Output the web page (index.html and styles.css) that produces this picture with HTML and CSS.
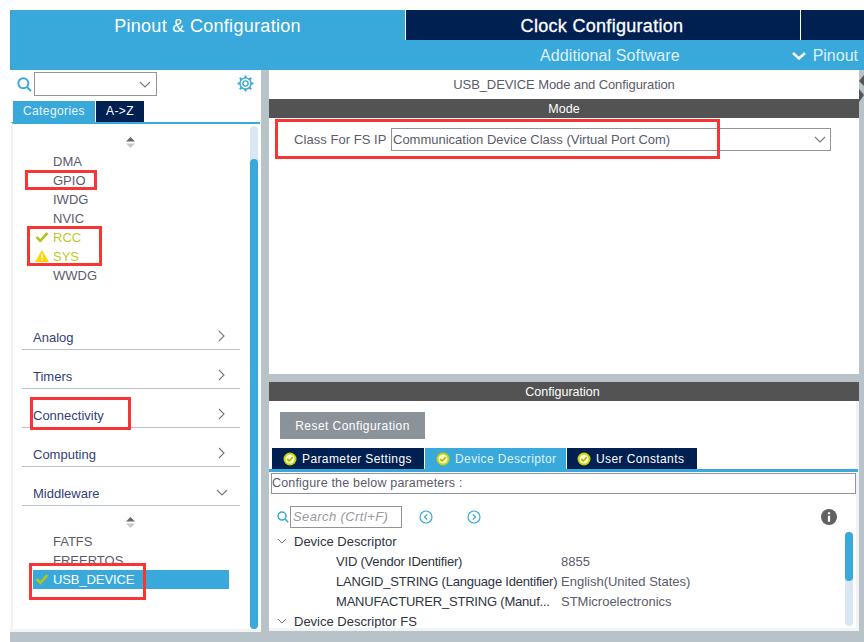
FILE: index.html
```html
<!DOCTYPE html>
<html lang="en">
<head>
    <meta charset="UTF-8" />
    <meta name="viewport" content="width=device-width, initial-scale=1.0">
    <title>Pinout &amp; Configuration</title>
    <link rel="stylesheet" href="styles.css">
</head>
<body>

<svg class="sprites" width="0" height="0">
    <symbol id="tick-badge" viewBox="0 0 14 14">
        <circle cx="7" cy="7" r="6.5" fill="#c9d500"/>
        <circle cx="7" cy="7" r="4.6" fill="#f4f6d8"/>
        <path d="M4.2 7l2 2 3.6-3.8" fill="none" stroke="#b5c000" stroke-width="1.8"/>
    </symbol>
    <symbol id="tick" viewBox="0 0 14 12">
        <path d="M1.5 6l3.8 3.8L12.5 2" fill="none" stroke="#b4c41a" stroke-width="2.6"/>
    </symbol>
    <symbol id="lens" viewBox="0 0 15 15">
        <circle cx="6.3" cy="6.3" r="5" fill="none" stroke="#39a9dc" stroke-width="1.9"/>
        <path d="M10 10l4 4" fill="none" stroke="#39a9dc" stroke-width="2"/>
    </symbol>
    <symbol id="chev-down" viewBox="0 0 12 7">
        <path d="M1 1l5 5 5-5" fill="none" stroke="currentColor" stroke-width="1.1"/>
    </symbol>
    <symbol id="chev-right" viewBox="0 0 7 12">
        <path d="M1 1l5 5-5 5" fill="none" stroke="currentColor" stroke-width="1.1"/>
    </symbol>
    <symbol id="updown" viewBox="0 0 9 11">
        <path d="M4.5 0L9 4.5H0z" fill="#666"/>
        <path d="M4.5 11L0 6.5h9z" fill="#c4c8cb"/>
    </symbol>
</svg>

<div class="app">
    <header class="top">
        <div class="top-tabs">
            <div class="top-tab active">Pinout &amp; Configuration</div>
            <div class="top-tab clock">Clock Configuration</div>
            <div class="top-tab rest"></div>
        </div>
        <div class="top-sub">
            <span class="sub-software">Additional Software</span>
            <span class="sub-pinout">
                <svg width="14" height="8" viewBox="0 0 14 8"><path d="M1 1l6 5.5L13 1" fill="none" stroke="#fff" stroke-width="2.4"/></svg>
                Pinout
            </span>
        </div>
    </header>

    <main class="main">
        <aside class="side">
            <div class="side-search">
                <svg class="lens" width="15" height="15"><use href="#lens"/></svg>
                <div class="side-select"><svg width="12" height="7"><use href="#chev-down"/></svg></div>
                <svg class="gear" width="17" height="17" viewBox="0 0 17 17">
                    <circle cx="8.5" cy="8.5" r="5.6" fill="none" stroke="#39a9dc" stroke-width="1.4"/>
                    <circle cx="8.5" cy="8.5" r="2.6" fill="none" stroke="#39a9dc" stroke-width="1.4"/>
                    <path d="M8.5 0.5v3M8.5 13.5v3M0.5 8.5h3M13.5 8.5h3M2.8 2.8l2.1 2.1M12.1 12.1l2.1 2.1M2.8 14.2l2.1-2.1M12.1 4.9l2.1-2.1" fill="none" stroke="#39a9dc" stroke-width="2"/>
                </svg>
            </div>
            <div class="side-tabs">
                <div class="side-tab active">Categories</div>
                <div class="side-tab">A-&gt;Z</div>
            </div>
            <div class="side-body">
                <div class="side-list">
                    <div class="updown"><svg width="9" height="11"><use href="#updown"/></svg></div>
                    <div class="item">DMA</div>
                    <div class="item">GPIO</div>
                    <div class="item">IWDG</div>
                    <div class="item">NVIC</div>
                    <div class="item ok"><svg width="14" height="12"><use href="#tick"/></svg>RCC</div>
                    <div class="item ok">
                        <svg width="14" height="12" viewBox="0 0 14 12">
                            <path d="M7 0l7 12H0z" fill="#ffd500"/>
                            <path d="M7 4v4M7 9v1.6" stroke="#fff" stroke-width="1.5"/>
                        </svg>SYS
                    </div>
                    <div class="item">WWDG</div>

                    <div class="cats">
                        <div class="cat">Analog<svg width="7" height="12"><use href="#chev-right"/></svg></div>
                        <div class="cat">Timers<svg width="7" height="12"><use href="#chev-right"/></svg></div>
                        <div class="cat">Connectivity<svg width="7" height="12"><use href="#chev-right"/></svg></div>
                        <div class="cat">Computing<svg width="7" height="12"><use href="#chev-right"/></svg></div>
                        <div class="cat">Middleware<svg class="open" width="12" height="7"><use href="#chev-down"/></svg></div>
                    </div>

                    <div class="updown second"><svg width="9" height="11"><use href="#updown"/></svg></div>
                    <div class="item">FATFS</div>
                    <div class="item">FREERTOS</div>
                    <div class="item selected"><svg width="14" height="12"><use href="#tick"/></svg>USB_DEVICE</div>
                </div>
                <div class="side-scroll"><div class="side-thumb"></div></div>
            </div>
        </aside>

        <section class="right">
            <div class="mode">
                <div class="mode-title">USB_DEVICE Mode and Configuration</div>
                <div class="bar">Mode</div>
                <div class="class-row">
                    <span class="class-label">Class For FS IP</span>
                    <div class="class-select">
                        Communication Device Class (Virtual Port Com)
                        <svg width="12" height="7"><use href="#chev-down"/></svg>
                    </div>
                </div>
            </div>

            <div class="config">
                <div class="bar">Configuration</div>
                <div class="reset">Reset Configuration</div>
                <div class="cfg-tabs">
                    <div class="cfg-tab"><svg width="14" height="14"><use href="#tick-badge"/></svg>Parameter Settings</div>
                    <div class="cfg-tab active"><svg width="14" height="14"><use href="#tick-badge"/></svg>Device Descriptor</div>
                    <div class="cfg-tab"><svg width="14" height="14"><use href="#tick-badge"/></svg>User Constants</div>
                </div>
                <div class="cfg-note">Configure the below parameters :</div>
                <div class="cfg-search">
                    <svg width="12" height="12"><use href="#lens"/></svg>
                    <div class="search-box">Search (Crtl+F)</div>
                    <svg class="nav first" width="14" height="14" viewBox="0 0 14 14">
                        <circle cx="7" cy="7" r="6" fill="none" stroke="#39a9dc" stroke-width="1.2"/>
                        <path d="M8.2 4.4L5.6 7l2.6 2.6" fill="none" stroke="#39a9dc" stroke-width="1.3"/>
                    </svg>
                    <svg class="nav" width="14" height="14" viewBox="0 0 14 14">
                        <circle cx="7" cy="7" r="6" fill="none" stroke="#39a9dc" stroke-width="1.2"/>
                        <path d="M5.8 4.4L8.4 7l-2.6 2.6" fill="none" stroke="#39a9dc" stroke-width="1.3"/>
                    </svg>
                    <svg class="info" width="16" height="16" viewBox="0 0 16 16">
                        <circle cx="8" cy="8" r="8" fill="#5f6163"/>
                        <path d="M8 3.2v2M8 6.8v6" stroke="#fff" stroke-width="2.2"/>
                    </svg>
                </div>
                <div class="tree-wrap">
                    <div class="tree">
                        <div class="tree-head"><svg width="10" height="6"><use href="#chev-down"/></svg>Device Descriptor</div>
                        <div class="tree-row"><span>VID (Vendor IDentifier)</span><span>8855</span></div>
                        <div class="tree-row"><span>LANGID_STRING (Language Identifier)</span><span>English(United States)</span></div>
                        <div class="tree-row"><span>MANUFACTURER_STRING (Manuf...</span><span>STMicroelectronics</span></div>
                        <div class="tree-head"><svg width="10" height="6"><use href="#chev-down"/></svg>Device Descriptor FS</div>
                    </div>
                    <div class="tree-scroll"><div class="tree-thumb"></div></div>
                </div>
            </div>
        </section>

        <svg class="splitter" width="5" height="28" viewBox="0 0 5 28">
            <path d="M5 0v11L0 6z" fill="#555"/>
            <path d="M0 14l5 6-5 7z" fill="#555"/>
        </svg>
    </main>

    <!-- annotations drawn over the screenshot -->
    <div class="mark mark-gpio"></div>
    <div class="mark mark-rcc"></div>
    <div class="mark mark-conn"></div>
    <div class="mark mark-usb"></div>
    <div class="mark mark-class"></div>
</div>

</body>
</html>
```

FILE: styles.css
```css
* {
    box-sizing: border-box;
}

body {
    margin: 0;
    padding: 10px 0 0 10px;
    width: 864px;
    height: 642px;
    overflow: hidden;
    background-color: #fff;
    font-family: "Liberation Sans", Arial, sans-serif;
    font-size: 13px;
    color: #5b5b6b;
}

.sprites {
    position: absolute;
}

.app {
    position: relative;
    width: 854px;
    height: 632px;
    background-color: #b8c3c9;
    display: flex;
    flex-direction: column;
}

/* top header */
.top {
    height: 60px;
    background-color: #39a9dc;
    color: #fff;
}

.top-tabs {
    display: flex;
    height: 30px;
}

.top-tab {
    text-align: center;
    font-size: 18px;
    line-height: 32px;
    padding-right: 1px;
}

.top-tab.active {
    width: 395px;
    padding-right: 0;
    letter-spacing: 0.3px;
}

.top-tab.clock {
    width: 396px;
    padding-right: 2px;
    background-color: #002052;
    border-left: 1px solid #fff;
    border-right: 1px solid #fff;
    -webkit-text-stroke: 0.3px #fff;
    letter-spacing: 0.3px;
}

.top-tab.rest {
    flex: 1;
    background-color: #002052;
}

.top-sub {
    position: relative;
    height: 30px;
    display: flex;
    justify-content: flex-end;
    align-items: center;
    padding: 2px 6px 0 0;
    font-size: 16px;
    color: #dff1fa;
}

.sub-software {
    position: absolute;
    left: 530px;
    letter-spacing: 0.1px;
}

.sub-pinout {
    display: flex;
    align-items: center;
    gap: 7px;
}

.sub-pinout svg {
    margin-left: -1px;
}

/* main area */
.main {
    position: relative;
    flex: 1;
    display: flex;
    min-height: 0;
}

.side {
    width: 251px;
    height: 562px;
    background-color: #fff;
    border-bottom: 3px solid #f1f3f4;
    display: flex;
    flex-direction: column;
}

.side-search {
    height: 31px;
    display: flex;
    align-items: center;
    padding: 2px 7px 5px 7px;
}

.side-search .lens {
    flex: none;
    margin-right: 2px;
}

.side-select {
    width: 123px;
    height: 24px;
    border: 1px solid #8f959b;
    display: flex;
    justify-content: flex-end;
    align-items: center;
    padding-right: 5px;
    color: #777;
}

.gear {
    margin-left: auto;
    margin-bottom: 1px;
}

.side-tabs {
    display: flex;
    gap: 1px;
    padding-left: 3px;
    height: 21px;
}

.side-tab {
    background-color: #002052;
    color: #fff;
    width: 48px;
    text-align: center;
    line-height: 21px;
    font-size: 12px;
    letter-spacing: 0.4px;
}

.side-tab.active {
    width: 82px;
    background-color: #39a9dc;
    color: #e6f4fb;
}

.side-body {
    flex: 1;
    min-height: 0;
    display: flex;
    border-top: 2px solid #39a9dc;
    margin-left: 1px;
    margin-right: 1px;
    border-left: 2px solid #f1f3f4;
    padding-right: 1px;
}

.side-list {
    flex: 1;
    min-width: 0;
    overflow: hidden;
}

.updown {
    height: 28px;
    padding: 13px 0 0 113px;
    line-height: 0;
}

.updown.second {
    height: 26px;
    padding-top: 11px;
}

.item {
    position: relative;
    height: 19px;
    line-height: 19px;
    padding-left: 40px;
}

.item svg {
    position: absolute;
    left: 22px;
    top: 3px;
}

.item.ok {
    color: #bccb1f;
}

.item.selected {
    width: 196px;
    margin-left: 20px;
    padding-left: 20px;
    background-color: #39a9dc;
    color: #fff;
    letter-spacing: -0.1px;
}

.item.selected svg {
    left: 2px;
}

.cats {
    margin: 26px 0 0 9px;
    width: 218px;
}

.cat {
    height: 39px;
    border-bottom: 1px solid #b8c3c9;
    padding: 17px 15px 0 11px;
    display: flex;
    justify-content: space-between;
    align-items: flex-start;
    color: #33407a;
    line-height: 19px;
}

.cat svg {
    color: #777;
    margin: 2px 0 0 0;
    flex: none;
}

.cat svg.open {
    margin: 5px -3px 0 0;
}

.side-scroll {
    flex: none;
    width: 8px;
    margin: 2px 1px 0 0;
    background-color: #d9e7f4;
    border-radius: 4px;
    padding-top: 33px;
    display: flex;
}

.side-thumb {
    flex: 1;
    background-color: #39a9dc;
    border-radius: 4px;
}

.right {
    width: 590px;
    height: 561px;
    margin-left: 8px;
    display: flex;
    flex-direction: column;
    gap: 8px;
}

.mode {
    height: 304px;
    background-color: #fff;
}

.mode-title {
    height: 29px;
    line-height: 30px;
    text-align: center;
    letter-spacing: -0.1px;
}

.bar {
    height: 19px;
    line-height: 20px;
    background-color: #525352;
    color: #fff;
    text-align: center;
    font-size: 12.5px;
}

.class-row {
    display: flex;
    align-items: center;
    margin-top: 10px;
    padding-left: 25px;
}

.class-label {
    width: 97px;
    letter-spacing: 0.05px;
}

.class-select {
    width: 440px;
    height: 23px;
    border: 1px solid #8f959b;
    padding-left: 1px;
    display: flex;
    justify-content: space-between;
    align-items: center;
    padding-right: 4px;
}

.class-select svg {
    color: #777;
}

.config {
    flex: 1;
    min-height: 0;
    background-color: #fff;
    border-bottom: 3px solid #f1f3f4;
    border-right: 3px solid #f1f3f4;
    display: flex;
    flex-direction: column;
}

.config .bar {
    margin-right: -3px;
    padding-right: 3px;
}

.reset {
    width: 145px;
    height: 27px;
    margin: 11px 0 0 11px;
    background-color: #8c9299;
    color: #fff;
    text-align: center;
    line-height: 28px;
    font-size: 12px;
    letter-spacing: 0.45px;
}

.cfg-tabs {
    display: flex;
    gap: 1px;
    height: 24px;
    margin-top: 9px;
    padding-left: 3px;
    margin-right: -2px;
    border-bottom: 3px solid #39a9dc;
}

.cfg-tab {
    display: flex;
    align-items: center;
    gap: 5px;
    height: 21px;
    padding-left: 11px;
    width: 152px;
    background-color: #002052;
    color: #fff;
    font-size: 12px;
    letter-spacing: 0.4px;
}

.cfg-tab.active {
    width: 141px;
    height: 24px;
    padding-bottom: 3px;
    background-color: #39a9dc;
    color: #dff1fa;
}

.cfg-tab:last-child {
    width: 130px;
    padding-left: 10px;
}

.cfg-note {
    height: 21px;
    margin: 1px 0 0 2px;
    width: 585px;
    border: 1px solid #8f959b;
    line-height: 19px;
    letter-spacing: 0.18px;
    font-size: 12.5px;
}

.cfg-search {
    display: flex;
    align-items: center;
    height: 22px;
    margin-top: 12px;
    padding-left: 8px;
}

.search-box {
    width: 112px;
    height: 22px;
    margin-left: 1px;
    border: 1px solid #8f959b;
    padding-left: 2px;
    line-height: 20px;
    font-style: italic;
    color: #9a9a9a;
    letter-spacing: 0.4px;
}

.nav {
    margin-left: 34px;
}

.nav.first {
    margin-left: 17px;
}

.info {
    margin-left: 340px;
}

.tree-wrap {
    flex: 1;
    min-height: 0;
    display: flex;
    overflow: hidden;
    margin-top: 3px;
}

.tree {
    flex: 1;
    min-width: 0;
}

.tree-head,
.tree-row {
    display: flex;
    height: 20px;
    align-items: center;
    color: #30343f;
}

.tree-head {
    padding-left: 8px;
    gap: 7px;
}

.tree-head svg {
    color: #666;
}

.tree-row {
    padding-left: 67px;
}

.tree-row span:first-child {
    width: 225px;
    white-space: nowrap;
    letter-spacing: -0.2px;
}

.tree-row span:last-child {
    color: #5b5b6b;
}

.tree-scroll {
    flex: none;
    width: 8px;
    height: 94px;
    margin: 1px 3px 0 0;
    background-color: #d9e7f4;
    border-radius: 4px;
}

.tree-thumb {
    height: 49px;
    background-color: #39a9dc;
    border-radius: 4px;
}

.splitter {
    position: absolute;
    right: 0;
    top: 5px;
}

/* red boxes */
.mark {
    position: absolute;
    border: 3px solid #f93434;
}

.mark-gpio {
    left: 15px;
    top: 160px;
    width: 72px;
    height: 20px;
}

.mark-rcc {
    left: 17px;
    top: 216px;
    width: 75px;
    height: 40px;
}

.mark-conn {
    left: 20px;
    top: 387px;
    width: 101px;
    height: 33px;
}

.mark-usb {
    left: 19px;
    top: 553px;
    width: 117px;
    height: 37px;
}

.mark-class {
    left: 265px;
    top: 109px;
    width: 445px;
    height: 40px;
}
```
